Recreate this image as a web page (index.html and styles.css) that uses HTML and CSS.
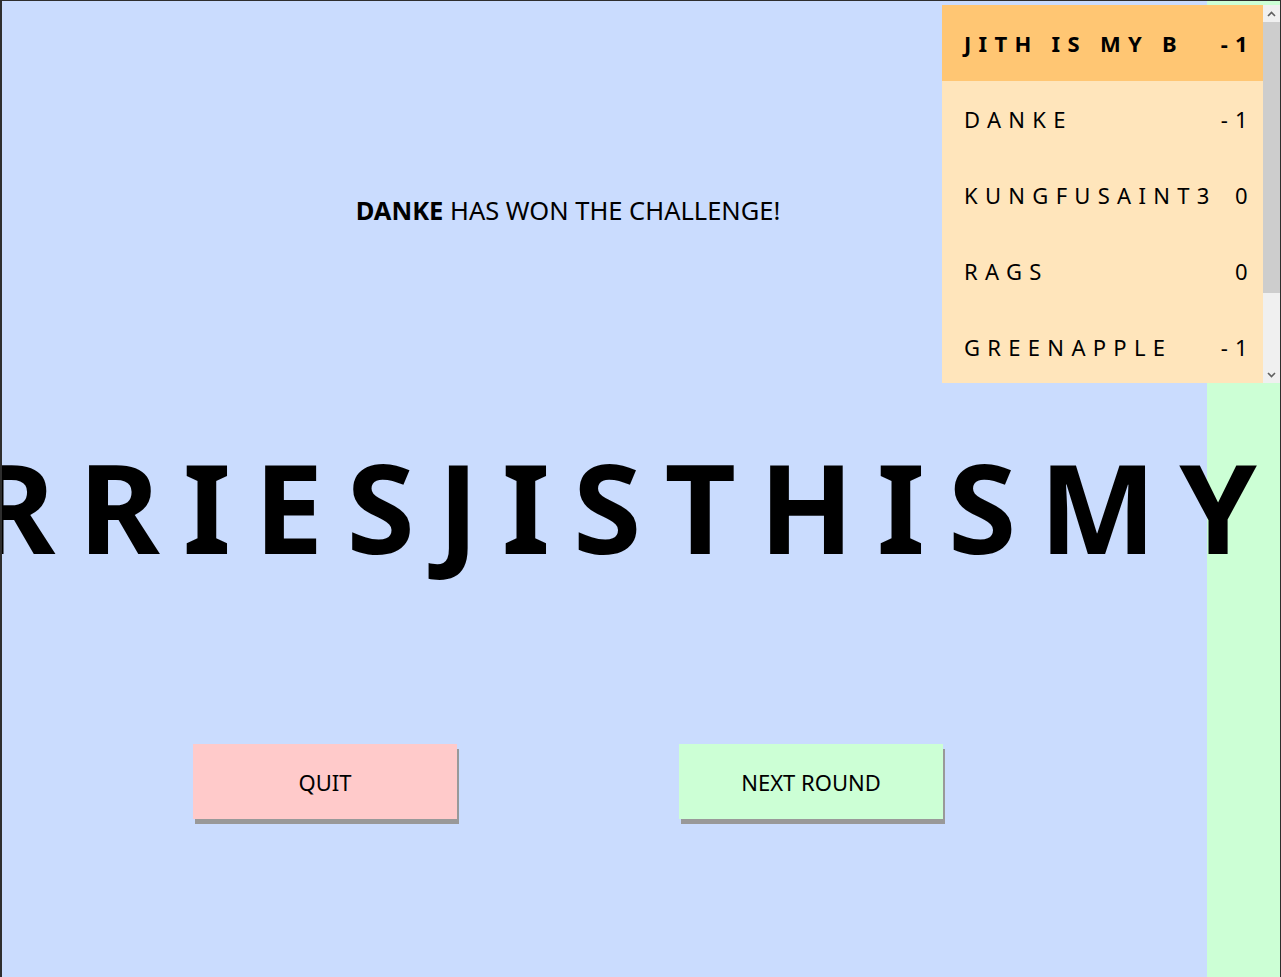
FILE: index.html
```html
<!DOCTYPE html>
<html>
<head>
<meta charset="utf-8">
<link rel="stylesheet" href="styles.css">
</head>
<body>
<div class="frame">
  <main class="stage">
    <p class="result"><b>DANKE</b> HAS WON THE CHALLENGE!</p>
    <div class="word-row"><span class="word">RRIESJISTHISMY</span></div>
    <div class="actions">
      <button class="btn btn-quit">QUIT</button>
      <button class="btn btn-next">NEXT ROUND</button>
    </div>
  </main>
  <aside class="side"></aside>
  <section class="board">
    <ul class="board-list">
      <li class="row row-me"><span class="name">JITH IS MY B</span><span class="score">-1</span></li>
      <li class="row"><span class="name">DANKE</span><span class="score">-1</span></li>
      <li class="row"><span class="name">KUNGFUSAINT3</span><span class="score">0</span></li>
      <li class="row"><span class="name">RAGS</span><span class="score">0</span></li>
      <li class="row"><span class="name">GREENAPPLE</span><span class="score">-1</span></li>
      <li class="row"><span class="name">BERRIES</span><span class="score">0</span></li>
    </ul>
    <div class="scrollbar">
      <div class="sb-btn">
        <svg width="9" height="6" viewBox="0 0 9 6"><path d="M1 5 L4.5 1.5 L8 5" fill="none" stroke="#606060" stroke-width="1.6"/></svg>
      </div>
      <div class="sb-thumb"></div>
      <div class="sb-track"></div>
      <div class="sb-btn">
        <svg width="9" height="6" viewBox="0 0 9 6"><path d="M1 1 L4.5 4.5 L8 1" fill="none" stroke="#606060" stroke-width="1.6"/></svg>
      </div>
    </div>
  </section>
</div>
</body>
</html>
```
FILE: styles.css
```css
* { box-sizing: border-box; }
html, body { margin: 0; padding: 0; }
body {
  background: #2e2e2e;
  font-family: "Noto Sans", "Open Sans", sans-serif;
  color: #000;
  width: 1281px;
  height: 977px;
  overflow: hidden;
}
.frame {
  position: relative;
  display: flex;
  margin: 1px 1px 0 2px;
  height: 976px;
  overflow: hidden;
}
.stage {
  flex: 0 0 1205px;
  min-width: 0;
  background: #cadcfe;
  display: flex;
  flex-direction: column;
  align-items: center;
  padding: 192px 73px 0 0;
}
.side {
  flex: 1 1 auto;
  background: #ccffd5;
}
.result {
  margin: 0;
  font-size: 25.5px;
  line-height: 34px;
  height: 34px;
  white-space: nowrap;
}
.result b { font-weight: 700; }
.word-row {
  margin-top: 217px;
  width: 100%;
  min-width: 0;
  display: flex;
  justify-content: center;
  position: relative;
  z-index: 1;
}
.word {
  flex: none;
  margin-left: 118px;
  font-size: 124px;
  line-height: 124px;
  font-weight: 700;
  letter-spacing: 23px;
  white-space: nowrap;
}
.actions {
  margin-top: 176px;
  display: flex;
  gap: 222px;
}
.btn {
  width: 264px;
  height: 75px;
  border: 0;
  padding: 0;
  font-family: inherit;
  font-size: 22px;
  color: #000;
  box-shadow: 2px 5px 0 #999999;
}
.btn-quit { background: #ffcaca; }
.btn-next { background: #ccffd5; }

.board {
  position: absolute;
  top: 4px;
  right: 0;
  width: 338px;
  height: 378px;
  display: flex;
  z-index: 2;
}
.board-list {
  list-style: none;
  margin: 0;
  padding: 0;
  flex: 0 0 321px;
  overflow: hidden;
  background: #ffe5bb;
}
.row {
  height: 76px;
  display: flex;
  align-items: center;
  justify-content: space-between;
  padding: 0 8px 0 22px;
  font-size: 22px;
  letter-spacing: 7.3px;
  white-space: nowrap;
}
.row-me {
  background: #ffc673;
  font-weight: 700;
}
.scrollbar {
  flex: 0 0 17px;
  display: flex;
  flex-direction: column;
  background: #f0f0f0;
}
.sb-btn {
  height: 17px;
  display: flex;
  align-items: center;
  justify-content: center;
  background: #f0f0f0;
}
.sb-thumb {
  height: 271px;
  background: #cdcdcd;
}
.sb-track { flex: 1 1 auto; }
```
